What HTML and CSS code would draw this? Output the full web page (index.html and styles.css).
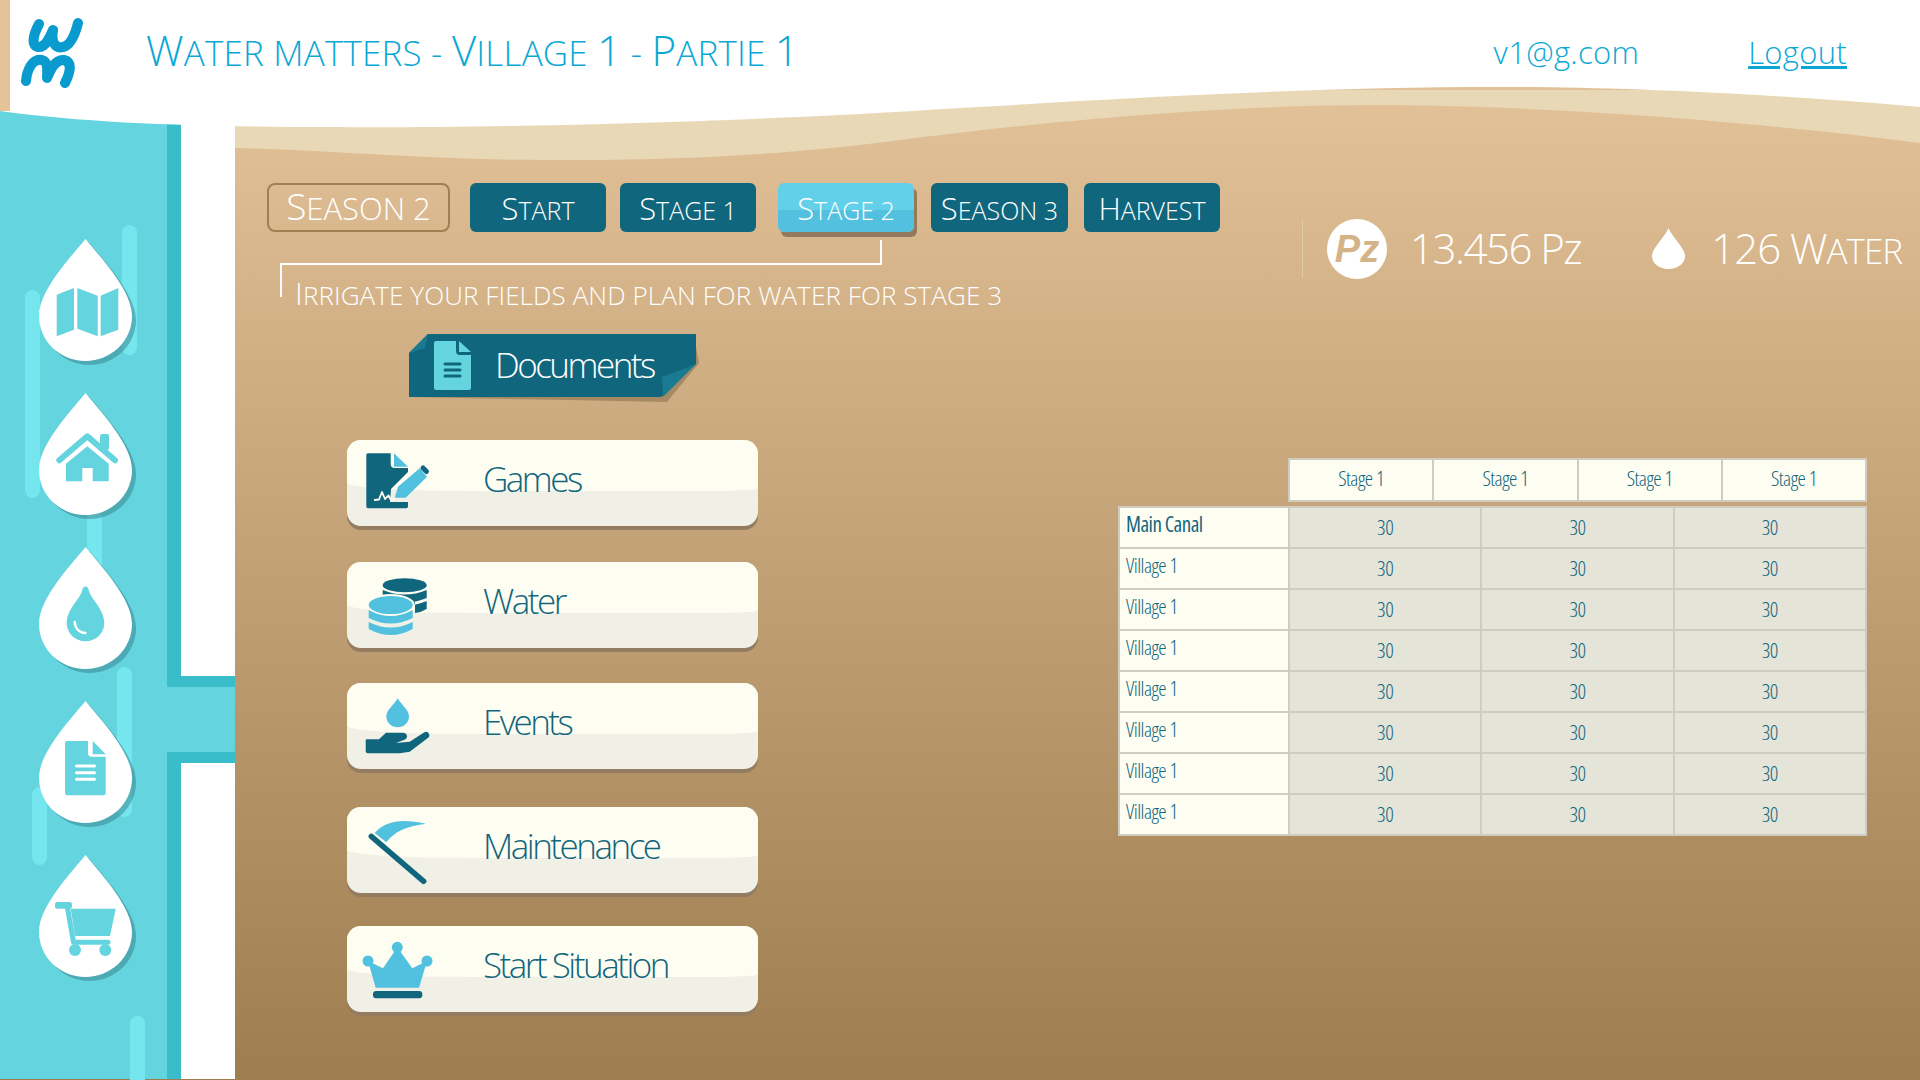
FILE: index.html
```html
<!DOCTYPE html>
<html lang="en">
<head>
  <meta charset="UTF-8">
  <title>Water matters</title>
  <link rel="stylesheet" href="styles.css">
</head>
<body>
  <div class="page">
    <!-- White header curve and sand band -->
    <svg class="wave" viewBox="0 0 1920 170" width="1920" height="170">
      <path fill="#e8d8b6" d="M235 90H1920V143C1700 115 1500 105 1376 105C1200 105 1000 127 900 140C750 160 620 160 551 160C430 160 330 150 235 148Z"/>
      <path fill="#ffffff" d="M0 0H1920V107C1750 92 1600 87 1499 87C1300 87 1100 100 960 108C700 125 450 128 330 127C230 127 100 125 0 111Z"/>
      <rect fill="#e3c397" width="10" height="111"/>
    </svg>

    <header class="topbar">
      <svg class="logo" viewBox="0 0 64 72" width="64" height="72">
        <g fill="none" stroke="#0a9bce" stroke-width="10" stroke-linecap="round" stroke-linejoin="round">
          <path d="M19 7C13 18 11 29 18 30C25 31 29 22 33 13C31 25 35 32 43 30C52 28 56 14 58 6"/>
          <path d="M6 64C7 52 13 41 22 43C29 45 27 54 27 61C31 51 36 42 44 43C53 45 50 56 45 66"/>
        </g>
      </svg>
      <h1 class="title"><span class="cap">W</span>ater matters - <span class="cap">V</span>illage <span class="cap">1</span> - <span class="cap">P</span>artie <span class="cap">1</span></h1>
      <div class="account">
        <span class="email">v1@g.com</span>
        <a class="logout" href="#">Logout</a>
      </div>
    </header>

    <aside class="sidebar">
      <div class="water">
        <i class="streak streak-1"></i>
        <i class="streak streak-2"></i>
        <i class="streak streak-3"></i>
        <i class="streak streak-4"></i>
        <i class="streak streak-5"></i>
        <i class="streak streak-6"></i>

        <nav class="drops">
          <svg viewBox="0 0 98 127" width="98" height="127">
            <path class="drop-shadow" d="M46.5 0C30 20 0 52 0 77C0 102 21 122 46.5 122C72 122 93 102 93 77C93 52 63 20 46.5 0Z" transform="translate(4 4)"/>
            <path class="drop-body" d="M46.5 0C30 20 0 52 0 77C0 102 21 122 46.5 122C72 122 93 102 93 77C93 52 63 20 46.5 0Z"/>
            <g class="drop-icon">
              <path d="M17.7 55.7L35 49V90.7L17.7 97.3Z"/>
              <path d="M38.3 49L58.7 56.7V97.3L38.3 89.7Z"/>
              <path d="M61.7 56.7L79.3 49V90.7L61.7 97.3Z"/>
            </g>
          </svg>
          <svg viewBox="0 0 98 127" width="98" height="127">
            <path class="drop-shadow" d="M46.5 0C30 20 0 52 0 77C0 102 21 122 46.5 122C72 122 93 102 93 77C93 52 63 20 46.5 0Z" transform="translate(4 4)"/>
            <path class="drop-body" d="M46.5 0C30 20 0 52 0 77C0 102 21 122 46.5 122C72 122 93 102 93 77C93 52 63 20 46.5 0Z"/>
            <g class="drop-icon">
              <path d="M20.3 67.3L48.3 43.3L76 67.3" fill="none" stroke="#64d4df" stroke-width="6" stroke-linecap="round" stroke-linejoin="round"/>
              <rect x="61" y="41" width="9" height="16" rx="2"/>
              <path d="M27 70.7L48.3 53.3L69.7 70.7V88.3H53.7V75H43.3V88.3H27Z"/>
            </g>
          </svg>
          <svg viewBox="0 0 98 127" width="98" height="127">
            <path class="drop-shadow" d="M46.5 0C30 20 0 52 0 77C0 102 21 122 46.5 122C72 122 93 102 93 77C93 52 63 20 46.5 0Z" transform="translate(4 4)"/>
            <path class="drop-body" d="M46.5 0C30 20 0 52 0 77C0 102 21 122 46.5 122C72 122 93 102 93 77C93 52 63 20 46.5 0Z"/>
            <g class="drop-icon">
              <path d="M46.5 39.5C44 39.5 43.5 42 43 44C41 52 28 62 27.7 76C27.7 86 36 94.3 46.5 94.3C57 94.3 65.3 86 65.3 76C65 62 52 52 50 44C49.5 42 49 39.5 46.5 39.5Z"/>
              <path d="M35.7 75C36 81 40 85.5 46.5 86" fill="none" stroke="#ffffff" stroke-width="2.4" stroke-linecap="round"/>
            </g>
          </svg>
          <svg viewBox="0 0 98 127" width="98" height="127">
            <path class="drop-shadow" d="M46.5 0C30 20 0 52 0 77C0 102 21 122 46.5 122C72 122 93 102 93 77C93 52 63 20 46.5 0Z" transform="translate(4 4)"/>
            <path class="drop-body" d="M46.5 0C30 20 0 52 0 77C0 102 21 122 46.5 122C72 122 93 102 93 77C93 52 63 20 46.5 0Z"/>
            <g class="drop-icon">
              <path d="M26 42Q26 40 28 40H49V52Q49 55.7 52.7 55.7H66.7V92Q66.7 94.3 64.7 94.3H28Q26 94.3 26 92Z"/>
              <path d="M53.7 40L66.7 53.3H53.7Z"/>
              <path d="M37.5 65H55.5M37.5 71.7H55.5M37.5 78.3H55.5" stroke="#ffffff" stroke-width="3" stroke-linecap="round"/>
            </g>
          </svg>
          <svg viewBox="0 0 98 127" width="98" height="127">
            <path class="drop-shadow" d="M46.5 0C30 20 0 52 0 77C0 102 21 122 46.5 122C72 122 93 102 93 77C93 52 63 20 46.5 0Z" transform="translate(4 4)"/>
            <path class="drop-body" d="M46.5 0C30 20 0 52 0 77C0 102 21 122 46.5 122C72 122 93 102 93 77C93 52 63 20 46.5 0Z"/>
            <g class="drop-icon">
              <rect x="16" y="47" width="17" height="6.7" rx="2.5"/>
              <path d="M31.7 53.7H76.7L71 81H36Z"/>
              <path d="M28 50L34.5 87.3H69" fill="none" stroke="#64d4df" stroke-width="5" stroke-linejoin="round" stroke-linecap="round"/>
              <circle cx="36" cy="95" r="6"/>
              <circle cx="66.3" cy="95" r="6"/>
            </g>
          </svg>
        </nav>
      </div>
      <div class="pipe">
        <div class="pipe-run"></div>
        <div class="pipe-junction"></div>
        <div class="pipe-run"></div>
      </div>
    </aside>

    <main class="main">
      <div class="top-row">
        <div class="tabs">
          <span class="season"><span class="cap">S</span>eason 2</span>
          <button class="tab"><span class="cap">S</span>tart</button>
          <button class="tab"><span class="cap">S</span>tage 1</button>
          <button class="tab tab-active"><span class="cap">S</span>tage 2</button>
          <button class="tab tab-wide"><span class="cap">S</span>eason 3</button>
          <button class="tab"><span class="cap">H</span>arvest</button>
        </div>
        <div class="stats">
          <span class="pz-badge">Pz</span>
          <span class="stat-pz">13.456 Pz</span>
          <svg class="stat-drop" viewBox="0 0 33 41" width="33" height="41">
            <path fill="#ffffff" d="M16.5 0C13 9 0 20 0 28C0 35.5 7.4 41 16.5 41C25.6 41 33 35.5 33 28C33 20 20 9 16.5 0Z"/>
          </svg>
          <span class="stat-water">126 <span class="cap">W</span><span class="small">ater</span></span>
        </div>
      </div>

      <p class="hint"><span class="cap">I</span>rrigate your fields and plan for water for stage 3</p>

      <div class="content">
        <div class="menu-col">
          <div class="doc-tag">
            <svg class="doc-tag-bg" viewBox="0 0 292 70" width="292" height="70">
              <path fill="#a58a63" d="M287 13L290 29L258 68L158 66L0 63Z"/>
              <path fill="#10667d" d="M0 19L19 0H287V30L252 63H0Z"/>
              <path fill="#1a7a92" d="M0 19L19 0L16 14Z"/>
              <path fill="#1a7a92" d="M287 30L253 43L254 63Z"/>
            </svg>
            <svg class="doc-tag-icon" viewBox="0 0 37 49" width="37" height="49">
              <path fill="#64d4df" d="M0 2Q0 0 2 0H22V10Q22 14 26 14H37V47Q37 49 35 49H2Q0 49 0 47Z"/>
              <path fill="#64d4df" d="M25 0L37 11H25Z"/>
              <path stroke="#10667d" stroke-width="3" stroke-linecap="round" d="M11 23H26M11 29H26M11 35H26"/>
            </svg>
            <span class="doc-tag-label">Documents</span>
          </div>

          <ul class="menu">
            <li class="menu-row">
              <svg viewBox="0 0 86 86" width="86" height="86">
                <path fill="#10667d" d="M21 13.3H43.7V24Q43.7 28 47.7 28H61V32L44 49L43 62H61V66.3Q61 68.3 59 68.3H21Q19.3 68.3 19.3 66.3V15Q19.3 13.3 21 13.3Z"/>
                <path fill="#52c1e0" d="M47 13.3L61 26.7H47Z"/>
                <path fill="#52c1e0" d="M47.7 57.7L51 46.7L72.7 28.3L80 36.7L58.7 57.7Z"/>
                <path fill="none" stroke="#10667d" stroke-width="5" stroke-linecap="round" d="M76 28L79.5 31.5"/>
                <path fill="none" stroke="#fefdf2" stroke-width="1.8" stroke-linecap="round" stroke-linejoin="round" d="M27.7 60L32 59.5L35 52L38 59L41.5 55.5L44 60L48 58.5"/>
              </svg>
              <span class="menu-label">Games</span>
            </li>
            <li class="menu-row">
              <svg viewBox="0 0 86 86" width="86" height="86">
                <ellipse fill="#10667d" cx="57.7" cy="23.3" rx="22" ry="7"/>
                <path fill="#10667d" d="M35.7 28Q57.7 37 79.7 28V36Q57.7 45 35.7 36Z"/>
                <path fill="#10667d" d="M35.7 39Q57.7 48 79.7 39V47Q75 50 68 51V40H35.7Z"/>
                <ellipse fill="#52c1e0" stroke="#fefdf2" stroke-width="2" cx="43.7" cy="43" rx="23" ry="10"/>
                <path fill="#52c1e0" d="M21.7 48Q43.7 60 65.7 48V56Q43.7 67 21.7 56Z"/>
                <path fill="#52c1e0" d="M21.7 60Q43.7 71 65.7 60V67Q43.7 79 21.7 67Z"/>
              </svg>
              <span class="menu-label">Water</span>
            </li>
            <li class="menu-row">
              <svg viewBox="0 0 86 86" width="86" height="86">
                <path fill="#52c1e0" d="M50.7 15.3C47 22 39.3 27 39.3 33.3C39.3 39.6 44.5 44.3 50.7 44.3C57 44.3 62 39.6 62 33.3C62 27 54.5 22 50.7 15.3Z"/>
                <path fill="#10667d" d="M18.7 57V68.3Q18.7 70.3 20.7 70.3H52.7L62.7 68.7L81.5 54.5Q83.5 52 81 49.5Q79.5 48 77 49.5L62.7 58.7L49 60L58 56.5Q61 54.5 59.5 51.5Q58.5 49.7 56 49.7H39L32 56.3H20Q18.7 56.3 18.7 57Z"/>
              </svg>
              <span class="menu-label">Events</span>
            </li>
            <li class="menu-row">
              <svg viewBox="0 0 86 86" width="86" height="86">
                <path fill="#52c1e0" d="M27.7 26C37.7 14.3 54.3 11 78.7 16.7C57.7 19.3 46 26 39.3 35.3Z"/>
                <path fill="none" stroke="#10667d" stroke-width="5.5" stroke-linecap="round" d="M24.3 29.3L76.7 74.3"/>
              </svg>
              <span class="menu-label">Maintenance</span>
            </li>
            <li class="menu-row">
              <svg viewBox="0 0 86 86" width="86" height="86">
                <path fill="#52c1e0" d="M21 35L36 42.3L50.3 21.3L65.3 42.3L80 35L72 61.7H28.7Z"/>
                <circle fill="#52c1e0" cx="21" cy="35" r="5.5"/>
                <circle fill="#52c1e0" cx="50.3" cy="21.3" r="5.5"/>
                <circle fill="#52c1e0" cx="80" cy="35" r="5.5"/>
                <rect fill="#10667d" x="26" y="65" width="49.3" height="7.3" rx="3"/>
              </svg>
              <span class="menu-label">Start Situation</span>
            </li>
          </ul>
        </div>

        <div class="table-col">
          <table class="stage-head">
            <tr><td>Stage 1</td><td>Stage 1</td><td>Stage 1</td><td>Stage 1</td></tr>
          </table>
          <table class="canal-table">
            <tr class="main-canal"><th>Main Canal</th><td>30</td><td>30</td><td>30</td></tr>
            <tr><th>Village 1</th><td>30</td><td>30</td><td>30</td></tr>
            <tr><th>Village 1</th><td>30</td><td>30</td><td>30</td></tr>
            <tr><th>Village 1</th><td>30</td><td>30</td><td>30</td></tr>
            <tr><th>Village 1</th><td>30</td><td>30</td><td>30</td></tr>
            <tr><th>Village 1</th><td>30</td><td>30</td><td>30</td></tr>
            <tr><th>Village 1</th><td>30</td><td>30</td><td>30</td></tr>
            <tr><th>Village 1</th><td>30</td><td>30</td><td>30</td></tr>
          </table>
        </div>
      </div>
    </main>
  </div>
</body>
</html>
```

FILE: styles.css
```css
/* General Styles */
body {
  margin: 0;
  font-family: 'Open Sans', sans-serif;
  font-weight: 300;
}

.page {
  position: relative;
  width: 1920px;
  height: 1080px;
  overflow: hidden;
  display: grid;
  grid-template-columns: 235px 1fr;
  grid-template-rows: 105px 1fr;
  background: linear-gradient(to bottom, #e2c198 100px, #9e7d50 1080px);
}

.wave {
  position: absolute;
  top: 0;
  left: 0;
  z-index: 1;
}

/* Header */
.topbar {
  grid-column: 1 / 3;
  position: relative;
  z-index: 2;
  display: flex;
  align-items: center;
  padding: 0 73px 0 20px;
  color: #0ba8d5;
}

.logo {
  flex: none;
  margin-top: 1px;
}

.title {
  margin: -6px 0 0 62px;
  font-size: 35px;
  font-weight: 300;
  letter-spacing: 0.2px;
  text-transform: uppercase;
  white-space: nowrap;
}

.title .cap {
  font-size: 42px;
}

.account {
  margin: -2px 0 0 auto;
  display: flex;
  gap: 109px;
  font-size: 31px;
  letter-spacing: 0.3px;
}

.logout {
  color: #0ba8d5;
}

/* Sidebar */
.sidebar {
  display: flex;
  margin-bottom: 1px;
  background-color: #ffffff;
}

.water {
  position: relative;
  width: 167px;
  background-color: #64d4df;
}

.streak {
  position: absolute;
  width: 15px;
  border-radius: 8px;
  background-color: #76e6ee;
}

.streak-1 { left: 122px; top: 120px; height: 130px; }
.streak-2 { left: 25px; top: 185px; height: 208px; }
.streak-3 { left: 87px; top: 405px; height: 60px; }
.streak-4 { left: 117px; top: 562px; height: 150px; }
.streak-5 { left: 32px; top: 682px; height: 78px; }
.streak-6 { left: 130px; top: 911px; height: 90px; }

.drops {
  position: relative;
  display: flex;
  flex-direction: column;
  gap: 27px;
  padding: 134px 0 0 39px;
}

.drop-shadow {
  fill: #34808c;
  opacity: 0.5;
}

.drop-body {
  fill: #ffffff;
}

.drop-icon {
  fill: #64d4df;
}

.pipe {
  flex: 1;
  display: flex;
  flex-direction: column;
}

.pipe-run {
  flex: 1;
  border-left: 14px solid #3abdcb;
}

.pipe-run:first-child {
  flex: none;
  height: 571px;
}

.pipe-junction {
  flex: none;
  height: 65px;
  background-color: #64d4df;
  border-top: 11px solid #3abdcb;
  border-bottom: 11px solid #3abdcb;
}

/* Main area */
.main {
  padding: 78px 0 0 32px;
  min-width: 0;
}

.top-row {
  display: flex;
  align-items: flex-start;
  height: 95px;
}

.tabs {
  display: flex;
  align-items: flex-start;
  color: #ffffff;
  text-transform: uppercase;
}

.season {
  box-sizing: border-box;
  width: 183px;
  height: 49px;
  margin-right: 20px;
  border: 2px solid #a07f52;
  border-radius: 8px;
  font-size: 31px;
  line-height: 42px;
  text-align: center;
  white-space: nowrap;
}

.season .cap {
  font-size: 37px;
}

.tab {
  width: 136px;
  height: 49px;
  margin-right: 14px;
  padding: 0;
  border: none;
  border-radius: 6px;
  background-color: #10667d;
  color: #ffffff;
  font-family: inherit;
  font-weight: 300;
  font-size: 25px;
  text-transform: uppercase;
  white-space: nowrap;
}

.tab .cap {
  font-size: 31px;
}

.tab-active {
  margin: 0 17px 0 8px;
  background: linear-gradient(to bottom, #62d0e8 0 55%, #52c0de 55% 100%);
  box-shadow: 3px 5px 0 #937a5c;
}

.tab-wide {
  width: 137px;
  margin-right: 16px;
}

.tab:last-child {
  margin-right: 0;
}

.stats {
  flex: none;
  display: flex;
  align-items: center;
  height: 59px;
  margin: 36px 0 0 82px;
  padding-left: 24px;
  border-left: 1px solid #e0cba8;
  color: #ffffff;
  font-size: 42px;
  white-space: nowrap;
}

.pz-badge {
  flex: none;
  width: 60px;
  height: 60px;
  border-radius: 50%;
  background-color: #ffffff;
  color: #d4b388;
  font-family: 'Liberation Sans', sans-serif;
  font-size: 38px;
  font-weight: 700;
  font-style: italic;
  line-height: 60px;
  text-align: center;
}

.stat-pz {
  margin: -3px 71px 0 23px;
  letter-spacing: -1.5px;
}

.stat-drop {
  flex: none;
  margin-right: 26px;
}

.stat-water {
  margin-top: -3px;
  letter-spacing: -1px;
}

.stat-water .small {
  font-size: 35px;
  text-transform: uppercase;
}

.hint {
  position: relative;
  margin: 0 0 0 28px;
  height: 56px;
  color: #ffffff;
  font-size: 26px;
  letter-spacing: 0.1px;
  line-height: 30px;
  text-transform: uppercase;
  white-space: nowrap;
}

.hint .cap {
  font-size: 31px;
}

/* Bracket that ties the hint to the active stage */
.hint::before {
  content: "";
  position: absolute;
  left: -15px;
  top: -15px;
  width: 598px;
  height: 32px;
  border-top: 2px solid #ffffff;
  border-left: 2px solid #ffffff;
}

.hint::after {
  content: "";
  position: absolute;
  left: 585px;
  top: -38px;
  height: 25px;
  border-left: 2px solid #ffffff;
}

.content {
  display: flex;
}

.menu-col {
  flex: 0 0 851px;
}

/* Documents tag */
.doc-tag {
  position: relative;
  display: flex;
  align-items: center;
  box-sizing: border-box;
  width: 287px;
  height: 63px;
  margin-left: 142px;
  padding-left: 25px;
  color: #ffffff;
}

.doc-tag-bg {
  position: absolute;
  left: 0;
  top: 0;
}

.doc-tag-icon {
  position: relative;
  flex: none;
}

.doc-tag-label {
  position: relative;
  margin: -3px 0 0 24px;
  font-size: 35px;
  letter-spacing: -2.5px;
}

/* Menu */
.menu {
  display: flex;
  flex-direction: column;
  gap: 36px;
  margin: 43px 0 0 80px;
  padding: 0;
  list-style: none;
}

.menu-row {
  position: relative;
  display: flex;
  align-items: center;
  width: 411px;
  height: 86px;
  border-radius: 14px;
  background-color: #f1f0e6;
  box-shadow: 0 4px 0 #947c60;
  color: #10667d;
}

/* Lighter top half with the curved gloss edge */
.menu-row::before {
  content: "";
  position: absolute;
  top: 0;
  left: 0;
  right: 0;
  height: 51px;
  border-radius: 14px 14px 40px 130px / 14px 14px 3px 8px;
  background-color: #fefdf2;
}

.menu-row:nth-child(3) { margin-top: -1px; }
.menu-row:nth-child(4) { margin-top: 2px; }
.menu-row:nth-child(5) { margin-top: -3px; }

.menu-row svg {
  position: relative;
  flex: none;
}

.menu-label {
  position: relative;
  margin: -10px 0 0 50px;
  font-size: 35px;
  letter-spacing: -2.5px;
  white-space: nowrap;
}

/* Tables */
.table-col {
  padding-top: 124px;
  color: #10667d;
  font-size: 21px;
  font-weight: 350;
  font-stretch: 75%;
}

.stage-head,
.canal-table {
  border-collapse: collapse;
  table-layout: fixed;
}

.stage-head {
  width: 579px;
  margin-left: 170px;
  background-color: #fefdf2;
}

.stage-head td,
.canal-table th,
.canal-table td {
  border: 2px solid #cfcdbf;
  padding: 0;
  text-align: center;
  letter-spacing: -0.5px;
}

.stage-head td {
  height: 36px;
  padding-bottom: 4px;
}

.canal-table {
  width: 749px;
  margin-top: 4px;
}

.canal-table th {
  width: 162px;
  height: 32px;
  padding: 0 0 7px 6px;
  background-color: #fefdf2;
  font-weight: 350;
  text-align: left;
}

.canal-table td {
  padding: 0 0 1px;
  background-color: #e5e4d9;
}

.main-canal th {
  font-weight: 500;
}
```
